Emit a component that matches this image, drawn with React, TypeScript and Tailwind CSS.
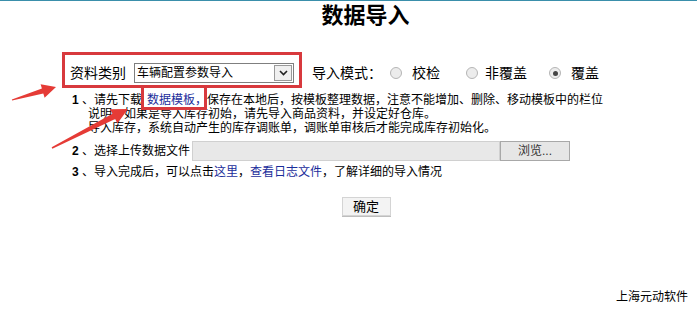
import React from "react";

const font = { fontFamily: '"Liberation Sans", "Noto Sans CJK SC", "Noto Sans", sans-serif' };

function Radio({ checked }: { checked?: boolean }) {
  return (
    <span className="inline-flex h-[12px] w-[12px] items-center justify-center rounded-full border border-[#b5b5b5] bg-[#ececec]">
      {checked && <span className="h-[5px] w-[5px] rounded-full bg-[#444]" />}
    </span>
  );
}

export default function App() {
  return (
    <div className="relative h-[310px] w-[697px] overflow-hidden bg-white text-black" style={font}>
      <div className="h-[1px] w-full bg-[#3a8fab]" />

      <div className="flex justify-center pl-[34px] text-[22px] font-bold leading-[30px]">数据导入</div>

      {/* type / mode row */}
      <div className="mt-[32px] flex h-[20px] items-center pl-[70px] text-[14px]">
        <span>资料类别</span>
        <div className="ml-[8px] flex h-[20px] w-[160px] items-center border border-[#7f7f7f] bg-white">
          <span className="flex-1 pl-[2px] text-[12px] leading-[18px]">车辆配置参数导入</span>
          <span className="mr-[1px] flex h-[16px] w-[18px] items-center justify-center border border-[#9a9a9a] bg-[#f0f0f0]">
            <svg width="9" height="6" viewBox="0 0 9 6">
              <path d="M1 1 L4.5 4.5 L8 1" fill="none" stroke="#222" strokeWidth="1.6" />
            </svg>
          </span>
        </div>
        <span className="ml-[18px]">导入模式：</span>
        <span className="ml-[8px] flex items-center"><Radio /></span>
        <span className="ml-[10px]">校检</span>
        <span className="ml-[26px] flex items-center"><Radio /></span>
        <span className="ml-[7px]">非覆盖</span>
        <span className="ml-[22px] flex items-center"><Radio checked /></span>
        <span className="ml-[10px]">覆盖</span>
      </div>

      {/* instructions */}
      <div className="mt-[10px] text-[12px] leading-[14px]">
        <div className="pl-[72px]">
          <span className="font-bold">1</span> 、请先下载
          <span className="ml-[5px] text-[#1b2d9b]">数据模板，</span>保存在本地后，按模板整理数据，注意不能增加、删除、移动模板中的栏位
        </div>
        <div className="pl-[88px]">说明，如果是导入库存初始，请先导入商品资料，并设定好仓库。</div>
        <div className="pl-[88px]">导入库存，系统自动产生的库存调账单，调账单审核后才能完成库存初始化。</div>
      </div>

      <div className="mt-[6px] flex h-[20px] items-center pl-[72px] text-[12px]">
        <span>
          <span className="font-bold">2</span> 、选择上传数据文件
        </span>
        <div className="ml-[2px] h-[20px] w-[308px] border border-[#d0d0d0] bg-[#e8e8e8]" />
        <div className="flex h-[20px] w-[70px] items-center justify-center border border-[#a8a8a8] bg-[#e6e6e6] text-[12px] text-[#333]">
          浏览...
        </div>
      </div>

      <div className="mt-[4px] pl-[72px] text-[12px] leading-[14px]">
        <span className="font-bold">3</span> 、导入完成后，可以点击
        <span className="text-[#1b2d9b]">这里</span>，<span className="text-[#1b2d9b]">查看日志文件</span>，了解详细的导入情况
      </div>

      <div className="mt-[18px] flex justify-center pl-[35px]">
        <button className="flex h-[19px] w-[49px] items-center justify-center border border-[#d4d4d4] bg-[#f3f3f3] text-[13px] shadow-[0_1px_0_#bdbdbd]">
          确定
        </button>
      </div>

      <div className="mt-[74px] flex justify-end pr-[9px] text-[12px] leading-[14px]">上海元动软件</div>

      {/* annotation overlays */}
      <div className="absolute left-[62px] top-[52px] h-[36px] w-[240px] border-[3px] border-[#d8393d]" />
      <div className="absolute left-[141px] top-[85px] h-[25px] w-[66px] border-[3px] border-[#d8393d]" />
      <svg className="absolute left-0 top-0" width="697" height="310" viewBox="0 0 697 310">
        <polygon
          fill="#e53b36"
          points="11.86,99.52 41.9,88.6 40.6,84.2 56,87 44.6,97.7 43.3,93.4 12.14,100.48"
        />
        <polygon
          fill="#e53b36"
          points="51.66,147.33 112.39,113.64 110.1,109.19 128,109 117.42,123.43 115.13,118.98 52.34,148.67"
        />
      </svg>
    </div>
  );
}
